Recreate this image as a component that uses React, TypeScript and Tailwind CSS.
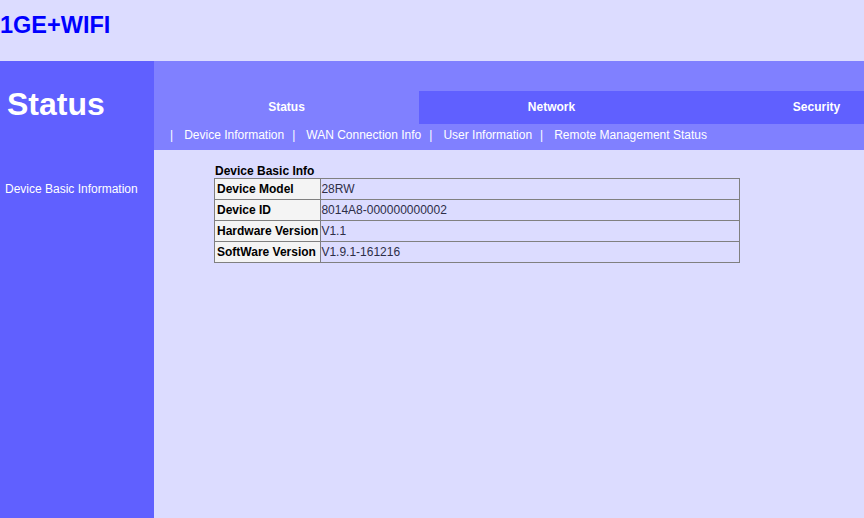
export default function App() {
  const rows = [
    ["Device Model", "28RW"],
    ["Device ID", "8014A8-000000000002"],
    ["Hardware Version", "V1.1"],
    ["SoftWare Version", "V1.9.1-161216"],
  ];
  const tabs = [
    { label: "Status", active: true },
    { label: "Network", active: false },
    { label: "Security", active: false },
  ];
  const subnav = ["Device Information", "WAN Connection Info", "User Information", "Remote Management Status"];

  return (
    <div className="h-[518px] w-[864px] overflow-hidden bg-[#dcdcff] font-['Liberation_Sans',Arial,sans-serif]">
      <div className="h-[61px] flex items-center">
        <span className="text-[23.5px] font-bold text-[#0000ff] leading-none -mt-[9px]">1GE+WIFI</span>
      </div>
      <div className="flex h-[457px]">
        <div className="w-[154px] shrink-0 bg-[#6060ff] text-white">
          <div className="pt-[25px] pl-[7px] text-[32px] font-bold leading-[36px]">Status</div>
          <div className="mt-[60px] pl-[5px] text-[12px] leading-[14px]">Device Basic Information</div>
        </div>
        <div className="flex-1 min-w-0">
          <div className="h-[89px] bg-[#8080ff] overflow-hidden">
            <div className="h-[30px]" />
            <div className="flex h-[33px]">
              {tabs.map((t) => (
                <div
                  key={t.label}
                  className={`w-[265px] shrink-0 flex items-center justify-center pb-[1px] text-[12px] font-bold text-white ${
                    t.active ? "bg-[#8080ff]" : "bg-[#6060ff]"
                  }`}
                >
                  {t.label}
                </div>
              ))}
            </div>
            <div className="h-[26px] flex items-start pt-[4px] pl-[16px] text-[12px] leading-[14px] text-white">
              {subnav.map((s) => (
                <span key={s} className="flex items-center">
                  <span>|</span>
                  <span className="ml-[11px] mr-[8px]">{s}</span>
                </span>
              ))}
            </div>
          </div>
          <div className="pl-[60px] pt-[14px]">
            <div className="text-[12px] font-bold text-black leading-[14px] pl-[1px]">Device Basic Info</div>
            <table className="w-[526px] border-collapse border border-[#2a2a3a] text-[12px]">
              <tbody>
                {rows.map(([k, v]) => (
                  <tr key={k} className="h-[21px]">
                    <td className="w-[105px] border border-[#808080] bg-[#f4f4f4] px-[2px] py-0 font-bold text-black whitespace-nowrap">
                      {k}
                    </td>
                    <td className="border border-[#808080] px-0 py-0 text-[#2e2e48]">{v}</td>
                  </tr>
                ))}
              </tbody>
            </table>
          </div>
        </div>
      </div>
    </div>
  );
}
